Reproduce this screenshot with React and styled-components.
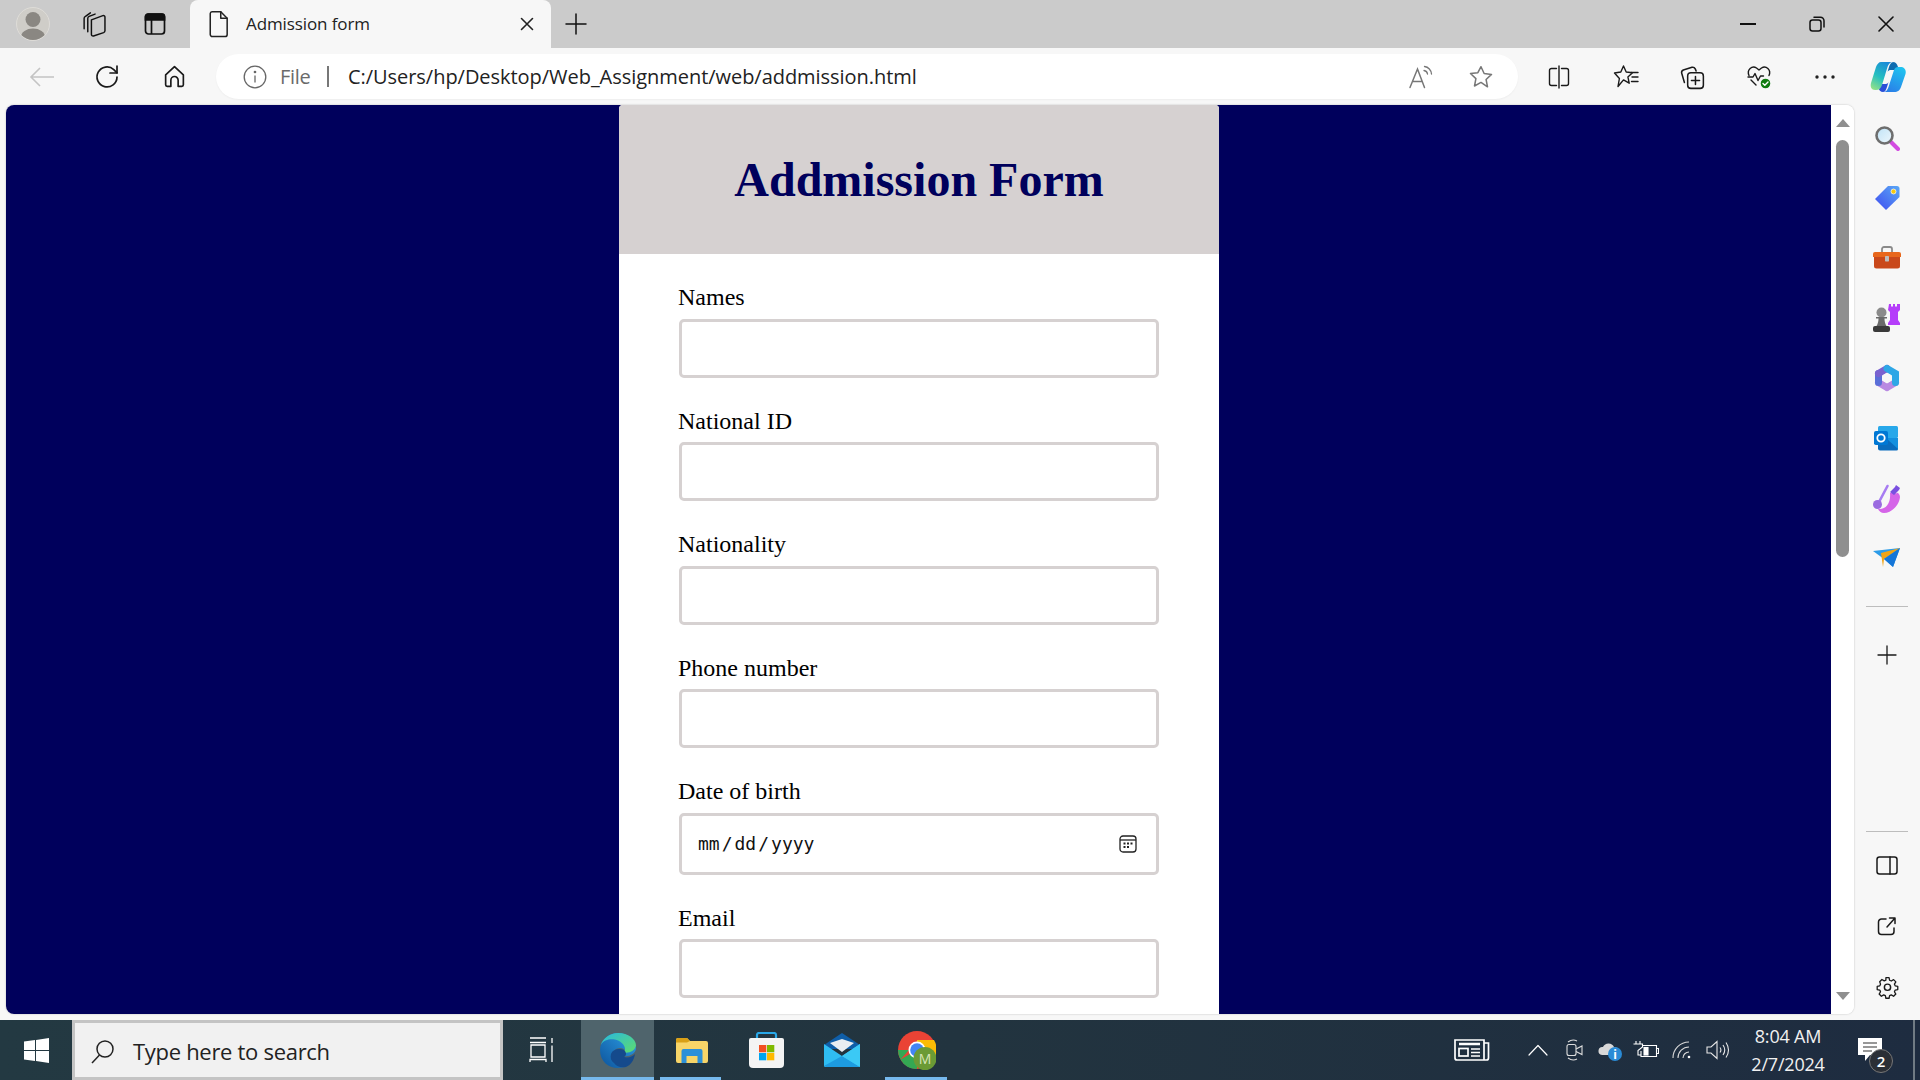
import React from "react";
import styled, { createGlobalStyle } from "styled-components";

const Global = createGlobalStyle`
  html, body { margin: 0; padding: 0; height: 100%; overflow: hidden; }
  * { box-sizing: border-box; }
`;
const UI = `"Open Sans", "Noto Sans", sans-serif`;

const Desktop = styled.div`
  width: 1920px; height: 1080px; display: flex; flex-direction: column;
  overflow: hidden; background: #f7f7f7; font-family: ${UI};
`;
const TitleBar = styled.header`
  height: 48px; flex: none; display: flex; align-items: stretch; background: #cbcbcb; color: #111;
`;
const Slot = styled.div`
  width: ${p => p.$w}px; flex: none; display: flex; align-items: center; justify-content: center; position: relative;
`;
const Tab = styled.div`
  width: 361px; flex: none; display: flex; align-items: center; background: #f7f7f7;
  border-radius: 8px 8px 0 0; padding-left: 18px; gap: 16px; font-size: 17px; color: #222;
`;
const TabTitle = styled.span` flex: 1; letter-spacing: -0.1px; padding-bottom: 2px; `;
const Grow = styled.div` flex: 1; `;
const Toolbar = styled.nav`
  height: 57px; flex: none; display: flex; align-items: center; padding-left: 9px; background: #f7f7f7; color: #1a1a1a;
`;
const AddressBar = styled.div`
  width: 1302px; height: 45px; margin: 0 8px 0 9px; flex: none; display: flex; align-items: center; padding-left: 27px;
  background: #fff; border-radius: 23px; box-shadow: 0 1px 2px rgba(0,0,0,.04);
`;
const FileLabel = styled.span` margin-left: 13px; font-size: 20px; color: #6a6a6a; letter-spacing: -0.3px; `;
const Sep = styled.span` width: 1.5px; height: 21px; background: #777; margin: 0 19px 0 17px; `;
const Url = styled.span` flex: 1; font-size: 20px; color: #222; letter-spacing: -0.04px; white-space: nowrap; `;
const Main = styled.div` flex: 1; display: flex; min-height: 0; `;
const Viewport = styled.div`
  width: 1848px; margin: 0 0 6px 6px; display: flex; border-radius: 8px; overflow: hidden; background: #fff;
  box-shadow: 0 0 2px rgba(0,0,0,.25);
`;
const Page = styled.main`
  flex: 1; background: #00005c; display: flex; justify-content: center; padding-left: 1px; overflow: hidden;
`;
const Card = styled.section` width: 600px; flex: none; background: #fff; border-radius: 4px 4px 0 0; `;
const CardHeader = styled.div`
  height: 149px; background: #d6d1d1; display: flex; align-items: center; justify-content: center; padding-bottom: 1px;
  border-radius: 4px 4px 0 0;
`;
const Title = styled.h1`
  margin: 0; font: bold 48px "Liberation Serif", "Times New Roman", serif; color: #00005c;
`;
const Form = styled.form` padding: 30px 60px 0 59px; `;
const Field = styled.div` margin-bottom: 30px; `;
const Label = styled.label`
  display: block; margin-bottom: 7px; font: 24px/27.5px "Liberation Serif", "Times New Roman", serif; color: #000;
`;
const InputWrap = styled.div` position: relative; `;
const Input = styled.input`
  display: block; width: 480px; height: ${p => (p.type === "date" ? 62 : 59)}px; border: 3px solid #d6d1d1; border-radius: 5px;
  background: #fff; outline: none; padding: 0 15px; margin-left: 1px;
  font: 18px "DejaVu Sans Mono", "Liberation Mono", monospace; color: #111;
  &::-webkit-calendar-picker-indicator { opacity: 0; }
  &::-webkit-datetime-edit-text { padding: 0 1px; }
`;
const CalendarOverlay = styled.svg`
  position: absolute; right: 22px; top: 22px; width: 18px; height: 18px; pointer-events: none;
`;
const Scrollbar = styled.div`
  width: 23px; flex: none; background: #fff; display: flex; flex-direction: column; align-items: center; padding: 14px 0 14px;
`;
const Arrow = styled.div`
  width: 0; height: 0; flex: none; border-left: 7.5px solid transparent; border-right: 7.5px solid transparent;
  ${p => p.$down ? "border-top: 8px solid #8f8f8f;" : "border-bottom: 8px solid #8f8f8f;"}
`;
const Thumb = styled.div` width: 13px; height: 417px; margin-top: 13px; border-radius: 7px; background: #8f8f8f; `;
const ScrollGap = styled.div` flex: 1; `;
const Sidebar = styled.aside`
  width: 66px; flex: none; display: flex; flex-direction: column; align-items: center; padding: 3px 0 4px; color: #1a1a1a;
`;
const SideSlot = styled.div` width: 66px; height: 60px; flex: none; display: flex; align-items: center; justify-content: center; `;
const SideRule = styled.div`
  width: 42px; height: 1px; flex: none; background: #bdbdbd; margin: ${p => p.$mt || 0}px 0 ${p => p.$mb || 0}px;
`;
const SideGrow = styled.div` flex: 1; `;
const Taskbar = styled.footer`
  height: 60px; flex: none; display: flex; align-items: stretch; color: #fff;
  background: linear-gradient(90deg, #233942 0%, #22343f 50%, #1e2c40 100%);
`;
const SearchBox = styled.div`
  width: 431px; flex: none; display: flex; align-items: center; padding: 2px 0 0 15px; gap: 18px;
  background: #f1f1f1; border: 3px solid #c4c4c4; color: #222; font-size: 22px; letter-spacing: -0.3px;
`;
const App_ = styled.div`
  width: ${p => p.$w || 75}px; flex: none; display: flex; align-items: center; justify-content: center; position: relative;
  background: ${p => p.$active ? "#4f646c" : "transparent"};
  ${p => p.$line ? `&::after { content: ""; position: absolute; bottom: 0; left: ${p.$line[0]}px; right: ${p.$line[1]}px; height: 3px; background: #76b9ed; }` : ""}
`;
const Clock = styled.div`
  width: 80px; flex: none; margin-left: 12px; display: flex; flex-direction: column; align-items: center; justify-content: center;
  gap: 3px; font-size: 18px; line-height: 25px; color: #f1f1f1; letter-spacing: -0.2px;
`;
const EndStrip = styled.div` width: 7px; flex: none; margin-left: 5px; border-left: 2px solid #707b84; `;
const Badge = styled.span`
  position: absolute; left: 41px; top: 29px; width: 24px; height: 24px; border-radius: 50%;
  background: #2b2f36; border: 1px solid #777; color: #fff; font-size: 15px; font-weight: 600;
  display: flex; align-items: center; justify-content: center;
`;
const Spacer = styled.div` width: ${p => p.$w}px; flex: none; `;
const NotifyIcon = styled.svg` margin-left: 4px; `;

const S = ({ w = 24, h, vb = "0 0 24 24", sw = 1.5, children }) => (
  <svg width={w} height={h || w} viewBox={vb} fill="none" stroke="currentColor" strokeWidth={sw} strokeLinecap="round" strokeLinejoin="round">{children}</svg>
);

const fields = ["Names", "National ID", "Nationality", "Phone number", "Date of birth", "Email"];

export default function App() {
  return (
    <Desktop>
      <Global />
      <TitleBar>
        <Slot $w={66}>
          <svg width="34" height="34" viewBox="0 0 34 34"><circle cx="17" cy="17" r="16.5" fill="#cfcdc8" stroke="#dedcd8" /><clipPath id="av"><circle cx="17" cy="17" r="16" /></clipPath><g clipPath="url(#av)" fill="#8a8782"><circle cx="17" cy="12.5" r="7.5" /><ellipse cx="17" cy="30" rx="12" ry="8.5" /></g></svg>
        </Slot>
        <Slot $w={54}>
          <S w={25} sw={1.4}><path d="M10 7.5 21 3.5a1.5 1.5 0 0 1 2 1.500V18a2 2 0 0 1-1.300 1.800L12 23a1.500 1.500 0 0 1-2-1.500z" /><path d="M6.500 19V6a2 2 0 0 1 1.300-1.800L13.500 2" /><path d="M3 16V6a2 2 0 0 1 1.300-1.800L9 .8" /></S>
        </Slot>
        <Slot $w={70}>
          <svg width="22" height="24" viewBox="0 0 22 24" fill="none" stroke="#111" strokeWidth="1.7"><rect x="1.5" y="2" width="19" height="20" rx="3" /><path d="M1.5 4.5a2.5 2.5 0 0 1 2.5-2.5h14a2.5 2.5 0 0 1 2.5 2.5V8h-19z" fill="#111" /><path d="M7.5 8v14" /></svg>
        </Slot>
        <Tab>
          <S w={22} h={28} vb="0 0 18 24" sw={1.3}><path d="M3 1.5h7.5L16 7v14a1.8 1.8 0 0 1-1.8 1.8H3.3A1.8 1.8 0 0 1 1.5 21V3A1.6 1.6 0 0 1 3 1.5z" /><path d="M10.5 1.5V7H16" /></S>
          <TabTitle>Admission form</TabTitle>
          <Slot $w={48}><S w={14} vb="0 0 14 14" sw={1.6}><path d="M1.5 1.5l11 11M12.5 1.5l-11 11" /></S></Slot>
        </Tab>
        <Slot $w={50}><S w={22} vb="0 0 22 22" sw={1.5}><path d="M11 1v20M1 11h20" /></S></Slot>
        <Grow />
        <Slot $w={69}><svg width="16" height="2"><rect width="16" height="2" fill="#111" /></svg></Slot>
        <Slot $w={69}><S w={16} vb="0 0 16 16" sw={1.5}><rect x="1" y="4" width="11" height="11" rx="2.5" /><path d="M5 1.2h6.5A3.5 3.5 0 0 1 15 4.7V11" /></S></Slot>
        <Slot $w={69}><S w={16} vb="0 0 16 16" sw={1.6}><path d="M1 1l14 14M15 1L1 15" /></S></Slot>
      </TitleBar>

      <Toolbar>
        <Slot $w={66}><svg width="26" height="22" viewBox="0 0 26 22" fill="none" stroke="#c4c4c4" strokeWidth="1.6"><path d="M25 11H2M11 2l-9 9 9 9" /></svg></Slot>
        <Slot $w={66}><S w={28} vb="0 0 28 28" sw={1.7}><path d="M23 14a10 10 0 1 1-3.2-7.4L23 9.8" /><path d="M23 3v7h-7" /></S></Slot>
        <Slot $w={66}><S w={25} vb="0 0 24 24" sw={1.6}><path d="M3.5 10.5 12 2.5l8.500 8v9.500a1.500 1.500 0 0 1-1.500 1.500h-3.500v-6a3.500 3.500 0 0 0-7 0v6H5a1.500 1.500 0 0 1-1.500-1.500z" /></S></Slot>
        <AddressBar>
          <svg width="24" height="24" viewBox="0 0 24 24" fill="none" stroke="#666" strokeWidth="1.3"><circle cx="12" cy="12" r="10.800" /><path d="M12 10.500v7" /><circle cx="12" cy="7" r=".7" fill="#666" /></svg>
          <FileLabel>File</FileLabel>
          <Sep />
          <Url>C:/Users/hp/Desktop/Web_Assignment/web/addmission.html</Url>
          <Slot $w={60}>
            <svg width="24" height="24" viewBox="0 0 24 24" fill="none" stroke="#777" strokeWidth="1.5" strokeLinecap="round"><path d="M1 22.500 8.500 4 15.500 22.500M3.500 16.500h9.500" /><path d="M15.500 1.500a8 8 0 0 1 7 7.500M15 5.500a4 4 0 0 1 3.500 3.500" strokeWidth="1.300" /></svg>
          </Slot>
          <Slot $w={60}>
            <svg width="26" height="26" viewBox="0 0 24 24" fill="none" stroke="#777" strokeWidth="1.4" strokeLinejoin="round"><path d="M12 2.500l2.900 6.300 6.800.8-5 4.700 1.300 6.800L12 17l-6 3.300 1.300-6.800-5-4.700 6.800-.8z" /></svg>
          </Slot>
          <Spacer $w={7} />
        </AddressBar>
        <Slot $w={66.5}><S w={24} sw={1.4}><path d="M9.500 3.500H4.500a2 2 0 0 0-2 2v13a2 2 0 0 0 2 2h5M14.500 3.500h5a2 2 0 0 1 2 2v13a2 2 0 0 1-2 2h-5M12 1v22" /></S></Slot>
        <Slot $w={66.5}><S w={26} vb="0 0 26 26" sw={1.4}><path d="M10.500 2l2.700 6 6.300.7-4.600 4.200 1.300 6.300-5.700-3.300L5 22.500l1.400-8L1.500 9l6.300-1z" /><path d="M18 8.500h7M19 13h6M18.500 17.500h6.500" /></S></Slot>
        <Slot $w={66.5}><S w={26} sw={1.4}><path d="M5 17 2.500 8.500C2 7 3 6 4 5.500L12 3c1.500-.3 2.500.5 3 1.500l.8 2" /><rect x="8" y="8" width="14.500" height="14.500" rx="3" /><path d="M15.200 11.500v7.500M11.500 15.200h7.500" /></S></Slot>
        <Slot $w={66.5}>
          <svg width="26" height="26" viewBox="0 0 26 26" fill="none" stroke="#1a1a1a" strokeWidth="1.4" strokeLinecap="round" strokeLinejoin="round"><path d="M3 11.500C.5 6 6 1 10.500 4L13 6l2.500-2C20 1 25.500 6 23 11.500" /><path d="M2 13h5l2-3.500 3 7 2.500-4.500h3M5 16l5 5" /><circle cx="19.500" cy="19.500" r="5.500" fill="#107c10" stroke="#f7f7f7" /><path d="M17 19.500l1.800 1.800 3.200-3.200" stroke="#fff" /></svg>
        </Slot>
        <Slot $w={66.5}><svg width="20" height="4"><circle cx="2" cy="2" r="1.700" fill="#222" /><circle cx="10" cy="2" r="1.700" fill="#222" /><circle cx="18" cy="2" r="1.700" fill="#222" /></svg></Slot>
        <Slot $w={58}>
          <svg width="36" height="32" viewBox="0 0 36 32"><defs><linearGradient id="cpA" x1=".7" y1="0" x2=".2" y2="1"><stop offset="0" stopColor="#1a8ad8" /><stop offset=".55" stopColor="#25bfc0" /><stop offset="1" stopColor="#8fe08a" /></linearGradient><linearGradient id="cpB" x1=".3" y1="1" x2=".8" y2="0"><stop offset="0" stopColor="#2a7fe8" /><stop offset="1" stopColor="#1fc4f0" /></linearGradient></defs><path d="M23 1c2.500 0 4 1.500 5 5l1 3h-9c-1 0-2 1-2.500 2l1.500-5c1-3 2-5 5-5z" fill="#0f6cb0" /><path d="M13 31c-2.500 0-4-1.500-5-5l-1-3h9c1 0 2-1 2.500-2l-1.500 5c-1 3-2 5-4 5z" fill="#2a4fd8" /><path d="M11 1h12c-3 0-4.500 2-5.500 5L12 24c-1 3-3 5-6 5H5C1.500 29 0 26 1 22L6 6c1-3 3-5 5-5z" fill="url(#cpA)" /><path d="M24 31H13c3 0 4.500-2 5.500-5L24 9c.8-2 2-3 4-3h2.500c4 0 6 3 5 7l-4.500 13c-1 3-3 5-7 5z" fill="url(#cpB)" /></svg>
        </Slot>
      </Toolbar>

      <Main>
        <Viewport>
          <Page>
            <Card>
              <CardHeader><Title>Addmission Form</Title></CardHeader>
              <Form>
                {fields.map(f => (
                  <Field key={f}>
                    <Label>{f}</Label>
                    <InputWrap>
                      <Input type={f === "Date of birth" ? "date" : "text"} aria-label={f} />
                      {f === "Date of birth" && (
                        <CalendarOverlay viewBox="0 0 18 18" fill="none" stroke="#222" strokeWidth="1.300"><rect x="1" y="1" width="16" height="16" rx="3" /><path d="M1 5h16" /><g fill="#222" stroke="none"><rect x="4.500" y="7.500" width="2" height="2" /><rect x="8" y="7.500" width="2" height="2" /><rect x="11.500" y="7.500" width="2" height="2" /><rect x="4.500" y="11" width="2" height="2" /><rect x="8" y="11" width="2" height="2" /></g></CalendarOverlay>
                      )}
                    </InputWrap>
                  </Field>
                ))}
              </Form>
            </Card>
          </Page>
          <Scrollbar><Arrow /><Thumb /><ScrollGap /><Arrow $down /></Scrollbar>
        </Viewport>
        <Sidebar>
          <SideSlot>
            <svg width="26" height="26" viewBox="0 0 26 26"><defs><linearGradient id="sLens" x1="0" y1="0" x2="1" y2="1"><stop offset="0" stopColor="#bfe3f7" /><stop offset="1" stopColor="#eef7fc" /></linearGradient></defs><path d="M16 16l8 8" stroke="#d24be0" strokeWidth="4" strokeLinecap="round" /><circle cx="10.500" cy="10.500" r="8" fill="url(#sLens)" stroke="#6e6e6e" strokeWidth="2.600" /></svg>
          </SideSlot>
          <SideSlot>
            <svg width="26" height="26" viewBox="0 0 26 26"><defs><linearGradient id="sTag" x1="0" y1="1" x2="1" y2="0"><stop offset="0" stopColor="#3f4cf0" /><stop offset="1" stopColor="#5aa8f5" /></linearGradient></defs><path d="M14 1h9c1.500 0 2.500 1 2.500 2.500V12L12 25 1 14z" fill="url(#sTag)" /><circle cx="19.500" cy="6.500" r="2.500" fill="#f6c90e" stroke="#fff" strokeWidth=".7" /></svg>
          </SideSlot>
          <SideSlot>
            <svg width="28" height="24" viewBox="0 0 28 24"><path d="M9 6V3a2 2 0 0 1 2-2h6a2 2 0 0 1 2 2v3" fill="none" stroke="#8a8a8a" strokeWidth="1.800" /><path d="M2 6h24a2 2 0 0 1 2 2v3H0V8a2 2 0 0 1 2-2z" fill="#e8671c" /><path d="M1 11h26v9a2.500 2.500 0 0 1-2.500 2.500h-21A2.500 2.500 0 0 1 1 20z" fill="#c9481a" /><rect x="12" y="10" width="4" height="5.500" rx=".7" fill="#bdbdbd" /></svg>
          </SideSlot>
          <SideSlot>
            <svg width="28" height="28" viewBox="0 0 28 28"><path d="M16 0h2v2.500h2V0h2v2.500h2V0h3v6l-2 2v8l2 3v2H15v-2l2-3V8l-2-2z" fill="#b53dfa" /><circle cx="8.500" cy="8.500" r="5" fill="#8a8a8a" /><path d="M3 13h11v1.500h-2.500c0 2.500.5 5 2 7.500H3.500c1.500-2.500 2-5 2-7.500H3z" fill="#6a6a6a" /><rect x="0" y="22" width="17" height="6" rx="2" fill="#3a3a3a" /></svg>
          </SideSlot>
          <SideSlot>
            <svg width="26" height="28" viewBox="0 0 26 28" fill="none" strokeWidth="7" strokeLinecap="round"><path d="M4.500 9.500v9M4.500 18.500l8.500 5M13 23.500l8.500-5" stroke="#b98ae2" /><path d="M4.500 18.500v-9" stroke="#5a6fd8" /><path d="M4.500 9.500 13 4.500" stroke="#7a62cf" /><path d="M13 4.500l8.500 5v9" stroke="#2ea7e6" /><circle cx="13" cy="14" r="4.500" fill="#f7f7f7" stroke="none" /></svg>
          </SideSlot>
          <SideSlot>
            <svg width="26" height="26" viewBox="0 0 26 26"><rect x="4" y="1" width="20" height="12" rx="1.500" fill="#28a8ea" /><path d="M4 13h20v11a1.500 1.500 0 0 1-1.500 1.500H6A2 2 0 0 1 4 23.500z" fill="#0a6cbd" /><path d="M12 13l12 0v11z" fill="#1490df" /><rect x="0" y="6" width="14" height="14" rx="1.800" fill="#0078d4" /><circle cx="7" cy="13" r="3.700" fill="none" stroke="#fff" strokeWidth="1.800" /></svg>
          </SideSlot>
          <SideSlot>
            <svg width="28" height="29" viewBox="0 0 28 29"><path d="M17 9c3-1 7 1 7 0 1-1 3 2 3 4-1 9-9 16-16 16-3 0-5-2-6-4 8 1 13-6 12-16z" fill="#d565e8" /><path d="M6 18 14.500 2" stroke="#a77cf2" strokeWidth="2.600" strokeLinecap="round" /><circle cx="4.500" cy="20.500" r="4.500" fill="#9b6be0" /><path d="M17 8l5-5 1-2 4 3-1 2-5 5z" fill="#7a50e0" /></svg>
          </SideSlot>
          <SideSlot>
            <svg width="28" height="20" viewBox="0 0 28 20"><path d="M0 3 27 0 20 19l-9-8z" fill="#2b9be8" /><path d="M8 5 27 0 11 11l-1 8z" fill="#f0a416" /><path d="M27 0 11 11l9 8z" fill="#1576d8" /></svg>
          </SideSlot>
          <SideRule $mt={18} $mb={18} />
          <SideSlot>
            <S w={20} vb="0 0 20 20" sw={1.300}><path d="M10 1v18M1 10h18" /></S>
          </SideSlot>
          <SideGrow />
          <SideRule $mb={4} />
          <SideSlot>
            <S w={22} h={20} vb="0 0 22 20" sw={1.500}><rect x="1" y="1" width="20" height="17" rx="2.500" /><path d="M14 1v17" /></S>
          </SideSlot>
          <SideSlot>
            <S w={20} vb="0 0 20 20" sw={1.500}><path d="M9 3H4.500A3 3 0 0 0 1.500 6v9.500a3 3 0 0 0 3 3H14a3 3 0 0 0 3-3V12M10 11l8-9M12.500 2H18v5.500" /></S>
          </SideSlot>
          <SideSlot>
            <S w={25} sw={1.400}><path d="M10.300 2.500h3.400l.6 2.800 1.800.8 2.500-1.500 2.400 2.400-1.500 2.500.8 1.800 2.800.6v3.400l-2.800.6-.8 1.800 1.500 2.500-2.400 2.400-2.500-1.500-1.800.8-.6 2.800h-3.400l-.6-2.800-1.800-.8-2.500 1.500-2.400-2.400 1.500-2.500-.8-1.800-2.800-.6v-3.400l2.800-.6.8-1.800L3.600 6.900 6 4.500l2.500 1.500 1.800-.8z" transform="translate(1.300 1.300) scale(.89)" /><circle cx="12" cy="12.700" r="3" /></S>
          </SideSlot>
        </Sidebar>
      </Main>

      <Taskbar>
        <Slot $w={72}>
          <svg width="25" height="25" viewBox="0 0 25 25" fill="#fff"><path d="M0 3.500 11 2v10H0zM12 1.900 25 0v12H12zM0 13h11v10L0 21.500zM12 13h13v12l-13-1.900z" /></svg>
        </Slot>
        <SearchBox>
          <svg width="25" height="25" viewBox="0 0 25 25" fill="none" stroke="#222" strokeWidth="1.500"><circle cx="15" cy="10" r="8" /><path d="M9.500 16 2 24" /></svg>
          <span>Type here to search</span>
        </SearchBox>
        <Slot $w={78}>
          <svg width="26" height="26" viewBox="0 0 26 26" fill="none" stroke="#fff" strokeWidth="1.300"><path d="M1 1h16M1 5.500h16M2 8h14v12H2zM1 25v-2.500h16V25M23 1v5M23 8.500V25" /></svg>
        </Slot>
        <App_ $active $line={[0, 0]} $w={73}>
          <svg width="36" height="37" viewBox="0 0 36 37"><defs><linearGradient id="edA" x1="0" y1="1" x2="1" y2="0"><stop offset="0" stopColor="#0d539b" /><stop offset="1" stopColor="#2ea1e8" /></linearGradient><linearGradient id="edB" x1="0" y1="0" x2="1" y2="1"><stop offset="0" stopColor="#29b8e0" /><stop offset="1" stopColor="#5fdc6c" /></linearGradient></defs><path d="M18 1C8 1 0 9 0 18c0 11 8 18 18 18 3 0 6-.7 9-2-8 1-15-3-15-10 0-5 4-8 8-8 2 0 6 1 6 5-1 2-2 3-2 3 5 1 11-2 12-7C36 8 28 1 18 1z" fill="url(#edA)" /><path d="M18 1C10 1 3 6 .7 13 4 7.500 10 6.500 15 7.500c5 1 10 5 10 9.500 0 1-.5 2.500-1.200 3.500 6 1 11.200-2 12.200-7C36 7 28 1 18 1z" fill="url(#edB)" /><path d="M14 31c-3-2-4-5-3-9 1-3 4-5 9-5 2 0 6 1 6 5 0 2-2 3-2 3 4 1 8 0 11-3-1 6-4 11-9 13-5 1-9 0-12-4z" fill="#154a8c" /></svg>
        </App_>
        <App_ $line={[6, 8]}>
          <svg width="32" height="26" viewBox="0 0 32 26"><path d="M0 3a2 2 0 0 1 2-2h9l3 3h16a2 2 0 0 1 2 2v18a2 2 0 0 1-2 2H2a2 2 0 0 1-2-2z" fill="#f8d568" /><path d="M0 3a2 2 0 0 1 2-2h9l3 3-3 1.500H0z" fill="#d9a016" /><path d="M5.500 14a2 2 0 0 1 2-2h17a2 2 0 0 1 2 2v12h-5v-7h-11v7h-5z" fill="#2b90d9" /></svg>
        </App_>
        <App_>
          <svg width="35" height="36" viewBox="0 0 35 36"><path d="M8 8V3a2 2 0 0 1 2-2h15a2 2 0 0 1 2 2v5" fill="none" stroke="#29a8e8" strokeWidth="2.200" /><path d="M2 6h31a2 2 0 0 1 2 2v24a4 4 0 0 1-4 4H4a4 4 0 0 1-4-4V8a2 2 0 0 1 2-2z" fill="#f4f4f4" /><rect x="10" y="13" width="7.300" height="7.300" fill="#f25022" /><rect x="18" y="13" width="7.300" height="7.300" fill="#7fba00" /><rect x="10" y="21" width="7.300" height="7.300" fill="#00a4ef" /><rect x="18" y="21" width="7.300" height="7.300" fill="#ffb900" /></svg>
        </App_>
        <App_>
          <svg width="36" height="34" viewBox="0 0 36 34"><path d="M18 0 36 12v4H0v-4z" fill="#0f5ea8" /><path d="M6 10l12-4 12 4-12 9z" fill="#e9eef2" /><path d="M0 11 18 23 36 11v21.500a1.500 1.500 0 0 1-1.500 1.500H1.500A1.500 1.500 0 0 1 0 32.500z" fill="#2fbdf3" /><path d="M0 33 18 23 36 34H2z" fill="#1d9be0" /><path d="M36 11 18 23 36 34z" fill="#3bc9f5" /></svg>
        </App_>
        <App_ $line={[6, 7]}>
          <svg width="38" height="39" viewBox="0 0 38 39"><circle cx="19" cy="19" r="19" fill="#ea4335" /><path d="M19 19 2.500 28.500A19 19 0 0 0 19 38z" fill="#34a853" /><path d="M0 19a19 19 0 0 0 2.500 9.500L11 19z" fill="#34a853" /><path d="M19 9h17a19 19 0 0 1-5 25L19 19z" fill="#fbbc05" /><circle cx="19" cy="19" r="8.500" fill="#fff" /><circle cx="19" cy="19" r="6.800" fill="#4285f4" /><circle cx="27" cy="27.500" r="11.500" fill="#6b9a35" /><text x="27" y="33" fontSize="14" fill="#d7e6b8" fontFamily="Open Sans, sans-serif" textAnchor="middle">M</text></svg>
        </App_>
        <Grow />
        <Slot $w={60}>
          <svg width="36" height="24" viewBox="0 0 36 24" fill="none" stroke="#fff" strokeWidth="1.700"><path d="M1 2h29v20H3a2 2 0 0 1-2-2zM30 5h4.500v15a2 2 0 0 1-2 2H30" /><path d="M5 6h21" strokeWidth="2.500" /><rect x="5" y="10.500" width="9" height="7.500" /><path d="M17 11h9M17 14.500h9M17 18h9" /></svg>
        </Slot>
        <Spacer $w={18} />
        <Slot $w={36}><S w={20} h={12} vb="0 0 20 12" sw={1.200}><path d="M1 11 10 1.500 19 11" /></S></Slot>
        <Slot $w={36}>
          <svg width="18" height="24" viewBox="0 0 18 24" fill="none" stroke="#ddd" strokeWidth="1.100"><rect x="2" y="6.500" width="9" height="11" rx="2" /><path d="M11 11l6-3v8.500l-6-3M3 4Q7.500 .5 12 3M3 20q4.500 3.500 9 1" /></svg>
        </Slot>
        <Slot $w={36}>
          <svg width="26" height="24" viewBox="0 0 26 24"><path d="M5 17a4 4 0 0 1 1-8 6 6 0 0 1 11 0 4 4 0 0 1 0 8z" fill="#d8d8d8" /><circle cx="18" cy="16" r="7" fill="#2a8bd6" /><text x="18" y="20.500" fontSize="12" fontWeight="700" fill="#fff" textAnchor="middle" fontFamily="Open Sans, sans-serif">i</text></svg>
        </Slot>
        <Slot $w={36}>
          <svg width="26" height="20" viewBox="0 0 26 20" fill="none" stroke="#fff" strokeWidth="1.100"><path d="M3 1v3M7 1v3M.5 4h9v3L5 10.500V15H8M9 5.500h14.500v11H8V11" /><path d="M23.500 8.500h2v5h-2" /><rect x="11" y="7.500" width="4" height="7.500" fill="#fff" /></svg>
        </Slot>
        <Slot $w={36}>
          <svg width="20" height="18" viewBox="0 0 20 18" fill="none" stroke="#d9d9d9" strokeWidth="1.100"><path d="M1 17A16 16 0 0 1 17 1M6 17A11 11 0 0 1 17 6M11 17a6 6 0 0 1 6-6" /><circle cx="17" cy="16" r="1.300" fill="#fff" stroke="none" /></svg>
        </Slot>
        <Slot $w={36}>
          <svg width="24" height="20" viewBox="0 0 24 20" fill="none" stroke="#e8e8e8" strokeWidth="1.100"><path d="M1 7h4l6-5.500v17L5 13H1zM14 7.500q1.800 2.500 0 5M17 5q3.500 5 0 10M20 2.500q5 7.500 0 15" /></svg>
        </Slot>
        <Clock><span>8:04 AM</span><span>2/7/2024</span></Clock>
        <Slot $w={80}>
          <NotifyIcon width="24" height="24" viewBox="0 0 24 24"><path d="M0 0h24v17H12l-5 6v-6H0z" fill="#fff" /><path d="M5 5h14M5 9h14M5 13h9" stroke="#333" strokeWidth="1.200" /></NotifyIcon>
          <Badge>2</Badge>
        </Slot>
        <EndStrip />
      </Taskbar>
    </Desktop>
  );
}
